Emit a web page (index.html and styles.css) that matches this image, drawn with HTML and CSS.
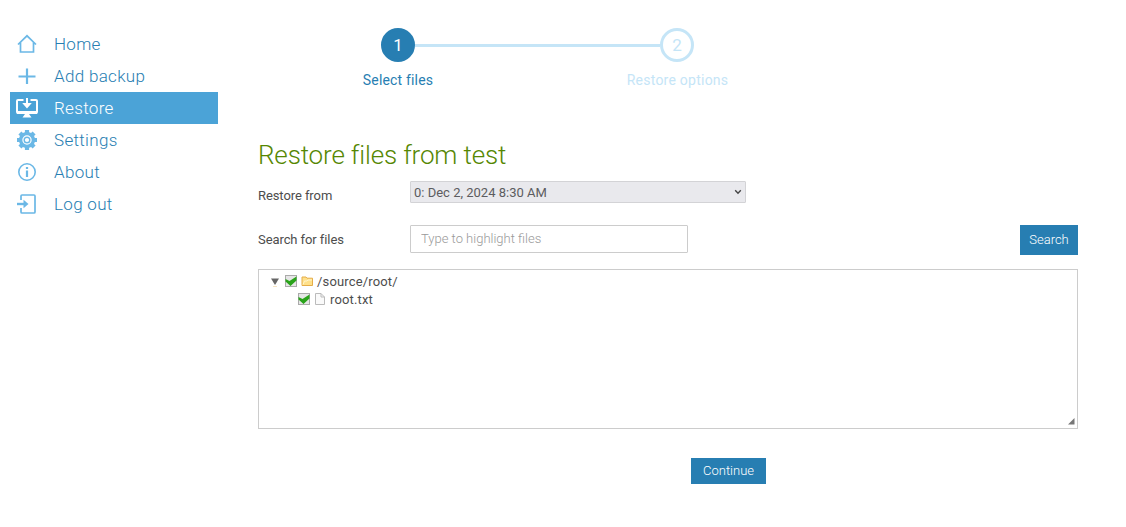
FILE: index.html
```
<!DOCTYPE html>
<html lang="en">
<head>
  <meta charset="UTF-8">
  <meta name="viewport" content="width=device-width, initial-scale=1.0">
  <title>Restore files</title>
  <link rel="stylesheet" href="styles.css">
</head>
<body>
  <nav class="mainmenu">
    <a class="item">
      <svg viewBox="0 0 24 24"><path d="M3 12.5 L12 3.8 L21 12.5 M5.5 10.5 V20 H18.5 V10.5" stroke-width="1.7"/></svg>
      <span>Home</span>
    </a>
    <a class="item">
      <svg viewBox="0 0 24 24"><path d="M12 4.5 V20 M3.5 12.5 H20.5" stroke-width="2.2"/></svg>
      <span>Add backup</span>
    </a>
    <a class="item active">
      <svg viewBox="0 0 24 24"><path d="M8.5 4 H3 Q2 4 2 5 V16 Q2 17 3 17 H21 Q22 17 22 16 V5 Q22 4 21 4 H15.5" stroke-width="2"/><path class="solid" d="M2 15 H22 V18 H2 Z M10 18 H14 L16.5 21.5 H7.5 Z M11 2 H13 V7 H16.8 L12 12.5 L7.2 7 H11 Z"/></svg>
      <span>Restore</span>
    </a>
    <a class="item">
      <svg viewBox="0 0 24 24"><circle cx="12" cy="12" r="6.4" stroke-width="3.4"/><path d="M12 2 V5 M12 19 V22 M2 12 H5 M19 12 H22 M4.9 4.9 L7 7 M17 17 L19.1 19.1 M19.1 4.9 L17 7 M7 17 L4.9 19.1" stroke-width="4.2"/><circle cx="12" cy="12" r="2.8" stroke-width="1.4"/></svg>
      <span>Settings</span>
    </a>
    <a class="item">
      <svg viewBox="0 0 24 24"><circle cx="12" cy="12" r="8.2" stroke-width="1.6"/><path d="M12 10.5 V17 M12 7 V9" stroke-width="2.2"/></svg>
      <span>About</span>
    </a>
    <a class="item">
      <svg viewBox="0 0 24 24"><path d="M6 8 V4 Q6 3 7 3 H19 Q20 3 20 4 V20 Q20 21 19 21 H7 Q6 21 6 20 V16" stroke-width="1.7"/><path d="M2 12 H10" stroke-width="2.4"/><path class="solid" d="M8.5 7.8 L13.5 12 L8.5 16.2 Z"/></svg>
      <span>Log out</span>
    </a>
  </nav>

  <main class="content">
    <div class="steps">
      <div class="step current">
        <div class="circle">1</div>
        <div class="label">Select files</div>
      </div>
      <div class="line"></div>
      <div class="step">
        <div class="circle">2</div>
        <div class="label options">Restore options</div>
      </div>
    </div>

    <h1>Restore files from test</h1>

    <div class="row">
      <label for="version">Restore from</label>
      <div class="select" id="version">
        <span>0: Dec 2, 2024 8:30 AM</span>
        <svg viewBox="0 0 8 6"><path d="M1.2 1.3 L4 4.2 L6.8 1.3"/></svg>
      </div>
    </div>

    <div class="row search">
      <label for="search">Search for files</label>
      <input type="text" id="search" placeholder="Type to highlight files">
      <button class="search-btn">Search</button>
    </div>

    <div class="filetree">
      <div class="node">
        <svg class="arrow" viewBox="0 0 10 12"><path d="M1 3.5 H9 L5 10 Z" fill="#666"/><path d="M3 11.5 H7" stroke="#f7e5c4"/></svg>
        <svg class="check" viewBox="0 0 12 12"><rect x=".5" y=".5" width="11" height="11" fill="#e6e6e6" stroke="#aaa"/><path d="M.5 4 L4.5 6 L11.5 1.5 V5.5 L5.5 11 L.5 6.5 Z" fill="#29a31a"/></svg>
        <svg class="folder" viewBox="0 0 13 12"><path d="M1 10.5 V2 H5 L6 3.2 H11.5 V10.5 Z" fill="#ffe08a" stroke="#e5ad48"/><path d="M2 9.5 L3.5 6 H6 L7 5 H11" fill="none" stroke="#fff5cc"/></svg>
        <span>/source/root/</span>
      </div>
      <div class="node child">
        <svg class="check" viewBox="0 0 12 12"><rect x=".5" y=".5" width="11" height="11" fill="#e6e6e6" stroke="#aaa"/><path d="M.5 4 L4.5 6 L11.5 1.5 V5.5 L5.5 11 L.5 6.5 Z" fill="#29a31a"/></svg>
        <svg class="file" viewBox="0 0 13 12"><path d="M1.5 .5 H7 L10.5 4 V11.5 H1.5 Z" fill="#fafafa" stroke="#bbb"/><path d="M7 .5 V4 H10.5" fill="none" stroke="#bbb"/></svg>
        <span>root.txt</span>
      </div>
      <svg class="grip" viewBox="0 0 7 7"><path d="M0 6.5 L6.5 0 V6.5 Z" fill="#777"/></svg>
    </div>

    <button class="continue-btn">Continue</button>
  </main>
</body>
</html>
```
FILE: styles.css
```
* {
  box-sizing: border-box;
}

body {
  margin: 0;
  display: flex;
  background: #fff;
  color: #4d4d4d;
  font-family: Roboto, "Noto Sans", sans-serif;
  font-size: 13px;
}

svg {
  display: block;
  flex: none;
}

/* menu */
.mainmenu {
  width: 208px;
  margin: 28px 40px 0 10px;
  flex: none;
}

.item {
  display: flex;
  align-items: center;
  height: 32px;
  padding-left: 5px;
  color: #277eb2;
  font-size: 17px;
  font-weight: 300;
  letter-spacing: 0.32px;
}

.item svg {
  width: 24px;
  height: 24px;
  margin-right: 15px;
  fill: none;
  stroke: #6bb8e6;
}

.item svg .solid {
  fill: #6bb8e6;
  stroke: none;
}

.item.active {
  background: #4ba3d7;
  color: #fff;
}

.item.active svg {
  stroke: #fff;
}

.item.active svg .solid {
  fill: #fff;
}

.content {
  width: 820px;
  display: flex;
  flex-direction: column;
}

/* wizard steps */
.steps {
  display: flex;
  margin: 28px 0 0 123px;
}

.step {
  width: 34px;
  display: flex;
  flex-direction: column;
  align-items: center;
  color: #c5e5f7;
}

.circle {
  width: 34px;
  height: 34px;
  border: 3px solid #c5e5f7;
  border-radius: 50%;
  font-size: 17px;
  line-height: 28px;
  text-align: center;
}

.label {
  margin-top: 9px;
  font-size: 14px;
  line-height: 18px;
  letter-spacing: 0.18px;
  white-space: nowrap;
}

.label.options {
  padding-left: 1px;
  letter-spacing: 0.24px;
}

.current {
  color: #277eb2;
}

.current .circle {
  background: #277eb2;
  border-color: #277eb2;
  color: #fff;
}

.line {
  width: 245px;
  height: 3px;
  margin-top: 16px;
  background: #c5e5f7;
}

h1 {
  margin: 48px 0 0;
  height: 44px;
  color: #568703;
  font-size: 26px;
  font-weight: 300;
  line-height: 36px;
  letter-spacing: -0.16px;
}

/* form */
.row {
  display: flex;
  height: 44px;
}

.row label {
  width: 152px;
  line-height: 30px;
  letter-spacing: -0.08px;
}

.select {
  display: flex;
  align-items: center;
  justify-content: space-between;
  width: 336px;
  height: 22px;
  padding: 0 3px;
  border: 1px solid #d3d3d6;
  border-radius: 1px;
  background: #e9e9ed;
  color: #5c5c60;
}

.select svg {
  width: 8px;
  height: 6px;
  fill: none;
  stroke: #444;
  stroke-width: 1.4;
}

input {
  width: 278px;
  height: 28px;
  padding: 0 10px 2px;
  border: 1px solid #ccc;
  border-radius: 1px;
  font: 300 13px Roboto, sans-serif;
}

input::placeholder {
  color: #999;
}

button {
  padding: 0 0 1px;
  border: 0;
  background: #277eb2;
  color: #fff;
  font: 300 13px Roboto, sans-serif;
}

.search-btn {
  width: 58px;
  height: 30px;
  margin-left: auto;
}

/* file tree */
.filetree {
  position: relative;
  height: 160px;
  padding: 2px 11px;
  border: 1px solid #ccc;
}

.node {
  display: flex;
  align-items: center;
  height: 18px;
  letter-spacing: 0.16px;
}

.child {
  padding-left: 28px;
}

.arrow {
  width: 10px;
  height: 12px;
  margin-right: 5px;
}

.check {
  width: 12px;
  height: 12px;
  margin-right: 4px;
}

.folder,
.file {
  width: 13px;
  height: 12px;
  margin-right: 3px;
}

.grip {
  position: absolute;
  right: 2px;
  bottom: 3px;
  width: 7px;
  height: 7px;
}

.continue-btn {
  width: 75px;
  height: 26px;
  margin: 29px 0 0 433px;
}
```
